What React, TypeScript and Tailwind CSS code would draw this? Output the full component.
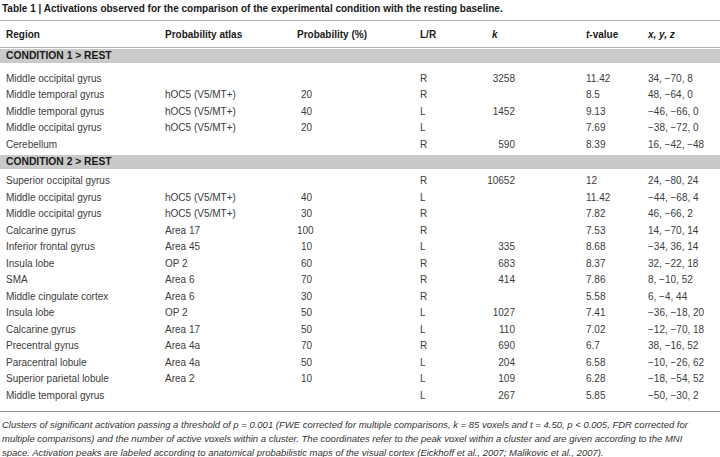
// Table of activations: experimental condition vs resting baseline
type Row = {
  region: string;
  atlas?: string;
  prob?: string;
  side: string;
  k?: string;
  t: string;
  xyz: string;
};

const condition1: Row[] = [
  { region: 'Middle occipital gyrus', side: 'R', k: '3258', t: '11.42', xyz: '34, −70, 8' },
  { region: 'Middle temporal gyrus', atlas: 'hOC5 (V5/MT+)', prob: '20', side: 'R', t: '8.5', xyz: '48, −64, 0' },
  { region: 'Middle temporal gyrus', atlas: 'hOC5 (V5/MT+)', prob: '40', side: 'L', k: '1452', t: '9.13', xyz: '−46, −66, 0' },
  { region: 'Middle occipital gyrus', atlas: 'hOC5 (V5/MT+)', prob: '20', side: 'L', t: '7.69', xyz: '−38, −72, 0' },
  { region: 'Cerebellum', side: 'R', k: '590', t: '8.39', xyz: '16, −42, −48' },
];

const condition2: Row[] = [
  { region: 'Superior occipital gyrus', side: 'R', k: '10652', t: '12', xyz: '24, −80, 24' },
  { region: 'Middle occipital gyrus', atlas: 'hOC5 (V5/MT+)', prob: '40', side: 'L', t: '11.42', xyz: '−44, −68, 4' },
  { region: 'Middle occipital gyrus', atlas: 'hOC5 (V5/MT+)', prob: '30', side: 'R', t: '7.82', xyz: '46, −66, 2' },
  { region: 'Calcarine gyrus', atlas: 'Area 17', prob: '100', side: 'R', t: '7.53', xyz: '14, −70, 14' },
  { region: 'Inferior frontal gyrus', atlas: 'Area 45', prob: '10', side: 'L', k: '335', t: '8.68', xyz: '−34, 36, 14' },
  { region: 'Insula lobe', atlas: 'OP 2', prob: '60', side: 'R', k: '683', t: '8.37', xyz: '32, −22, 18' },
  { region: 'SMA', atlas: 'Area 6', prob: '70', side: 'R', k: '414', t: '7.86', xyz: '8, −10, 52' },
  { region: 'Middle cingulate cortex', atlas: 'Area 6', prob: '30', side: 'R', t: '5.58', xyz: '6, −4, 44' },
  { region: 'Insula lobe', atlas: 'OP 2', prob: '50', side: 'L', k: '1027', t: '7.41', xyz: '−36, −18, 20' },
  { region: 'Calcarine gyrus', atlas: 'Area 17', prob: '50', side: 'L', k: '110', t: '7.02', xyz: '−12, −70, 18' },
  { region: 'Precentral gyrus', atlas: 'Area 4a', prob: '70', side: 'R', k: '690', t: '6.7', xyz: '38, −16, 52' },
  { region: 'Paracentral lobule', atlas: 'Area 4a', prob: '50', side: 'L', k: '204', t: '6.58', xyz: '−10, −26, 62' },
  { region: 'Superior parietal lobule', atlas: 'Area 2', prob: '10', side: 'L', k: '109', t: '6.28', xyz: '−18, −54, 52' },
  { region: 'Middle temporal gyrus', side: 'L', k: '267', t: '5.85', xyz: '−50, −30, 2' },
];

const DataRow = ({ row }: { row: Row }) => (
  <div className="flex h-[16.5px] items-center pl-[6px] whitespace-nowrap">
    <div className="w-[159px] shrink-0">{row.region}</div>
    <div className="w-[132px] shrink-0">{row.atlas}</div>
    <div className="w-[123px] shrink-0">
      <div className="w-[15px] text-right">{row.prob}</div>
    </div>
    <div className="w-[67px] shrink-0">{row.side}</div>
    <div className="w-[28px] shrink-0 text-right">{row.k}</div>
    <div className="w-[71px] shrink-0" />
    <div className="w-[62px] shrink-0">{row.t}</div>
    <div>{row.xyz}</div>
  </div>
);

const Band = ({ label }: { label: string }) => (
  <div className="flex h-[14px] items-center bg-[#c9c9c9] pl-[6px] text-[10.3px] font-bold text-[#1a1a1a]">
    {label}
  </div>
);

export default function App() {
  return (
    <div className="w-[720px] h-[457px] overflow-hidden bg-white text-[10px] text-[#3c3c3c] font-['Liberation_Sans',Arial,sans-serif]">
      <div className="h-[17px] pl-[2px] leading-[17px] font-bold text-[#1a1a1a] whitespace-nowrap">
        Table 1 | Activations observed for the comparison of the experimental condition with the resting baseline.
      </div>

      <div className="mt-[3px] border-t border-[#b4b4b4]" />
      <div className="flex h-[26px] items-center pl-[6px] font-bold text-[#1a1a1a] whitespace-nowrap">
        <div className="w-[159px] shrink-0">Region</div>
        <div className="w-[132px] shrink-0">Probability atlas</div>
        <div className="w-[123px] shrink-0">Probability (%)</div>
        <div className="w-[72px] shrink-0">L/R</div>
        <div className="w-[94px] shrink-0 italic">k</div>
        <div className="w-[62px] shrink-0"><span className="italic">t</span>-value</div>
        <div className="italic">x, y, z</div>
      </div>
      <div className="border-t border-[#b4b4b4]" />

      <div className="mt-[1px]">
        <Band label="CONDITION 1 > REST" />
        <div className="pt-[7px] pb-[2px]">
          {condition1.map((r, i) => (
            <DataRow key={i} row={r} />
          ))}
        </div>
        <Band label="CONDITION 2 > REST" />
        <div className="pt-[4px] pb-[7px]">
          {condition2.map((r, i) => (
            <DataRow key={i} row={r} />
          ))}
        </div>
      </div>

      <div className="border-t border-[#8c8c8c]" />
      <div className="pt-[6px] pl-[2px] text-[9.5px] leading-[14px] italic text-[#333] whitespace-nowrap">
        <div>Clusters of significant activation passing a threshold of p = 0.001 (FWE corrected for multiple comparisons, k = 85 voxels and t = 4.50, p &lt; 0.005, FDR corrected for</div>
        <div>multiple comparisons) and the number of active voxels within a cluster. The coordinates refer to the peak voxel within a cluster and are given according to the MNI</div>
        <div>space. Activation peaks are labeled according to anatomical probabilistic maps of the visual cortex (Eickhoff et al., 2007; Malikovic et al., 2007).</div>
      </div>
    </div>
  );
}
